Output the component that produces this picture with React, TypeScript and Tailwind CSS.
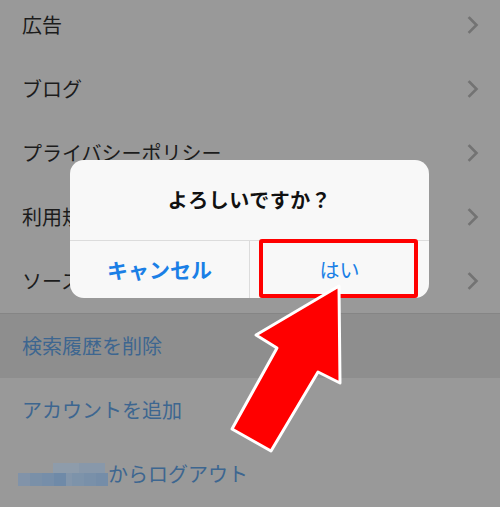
import React from "react";

const font = { fontFamily: '"Noto Sans CJK JP", "Noto Sans", sans-serif' };

function Chevron() {
  return (
    <svg width="12" height="18" viewBox="0 0 12 18" className="shrink-0">
      <polyline points="2.5,2 9.5,9 2.5,16" fill="none" stroke="#737373" strokeWidth="2.6" strokeLinecap="square" />
    </svg>
  );
}

function Row({ label }: { label: string }) {
  return (
    <div className="h-16 flex items-center justify-between pl-[22px] pr-[21px]">
      <span className="text-[20px] text-[#1c1c1c] leading-none">{label}</span>
      <Chevron />
    </div>
  );
}

function Pixelated() {
  return (
    <div className="relative w-[90px] h-[23px]">
      <div className="absolute left-[35px] top-0 w-[26px] h-[10px] bg-[#8e9cab]" />
      <div className="absolute left-[61px] top-0 w-[26px] h-[10px] bg-[#8898aa]" />
      <div className="absolute left-0 top-[10px] flex h-[13px]">
        <div className="w-[12px] bg-[#8193a9]" />
        <div className="w-[12px] bg-[#7a90a8]" />
        <div className="w-[12px] bg-[#768ea9]" />
        <div className="w-[12px] bg-[#6f8aa8]" />
        <div className="w-[6px] bg-[#8396ab]" />
        <div className="w-[12px] bg-[#7d93aa]" />
        <div className="w-[12px] bg-[#7990a9]" />
        <div className="w-[12px] bg-[#758da8]" />
      </div>
    </div>
  );
}

export default function App() {
  return (
    <div className="relative w-[500px] h-[507px] overflow-hidden bg-[#999999]" style={font}>
      <div className="-mt-[7px]">
        <Row label="広告" />
        <Row label="ブログ" />
        <Row label="プライバシーポリシー" />
        <Row label="利用規約" />
        <Row label="ソース" />
        <div className="h-px bg-[#858585]" />
        <div className="h-16 bg-[#8e8e8e] flex items-center pl-[22px]">
          <span className="text-[20px] text-[#3d6690] leading-none">検索履歴を削除</span>
        </div>
        <div className="h-16 flex items-center pl-[22px]">
          <span className="text-[20px] text-[#3d6690] leading-none">アカウントを追加</span>
        </div>
        <div className="h-16 flex items-center pl-[18px]">
          <Pixelated />
          <span className="text-[20px] text-[#3d6690] leading-none">からログアウト</span>
        </div>
      </div>

      {/* Dialog */}
      <div className="absolute left-[70px] top-[160px] w-[359px] h-[138px] rounded-[14px] bg-[#f8f8f8] flex flex-col overflow-hidden">
        <div className="h-[80px] flex items-center justify-center">
          <span className="text-[20px] font-bold text-[#111111] leading-none tracking-[0.5px]">よろしいですか？</span>
        </div>
        <div className="h-px bg-[#dcdcdc]" />
        <div className="flex-1 flex">
          <div className="flex-1 flex items-center justify-center">
            <span className="text-[21px] font-bold text-[#1a7fe6] leading-none">キャンセル</span>
          </div>
          <div className="w-px bg-[#dcdcdc]" />
          <div className="flex-1 flex items-center justify-center">
            <span className="text-[20px] text-[#1a7fe6] leading-none">はい</span>
          </div>
        </div>
      </div>

      {/* Red highlight box */}
      <div className="absolute left-[259px] top-[239px] w-[159px] h-[59px] border-[4px] border-[#ff0000] rounded-[3px]" />

      {/* Arrow */}
      <svg className="absolute left-0 top-0" width="500" height="507" viewBox="0 0 500 507">
        <polygon
          points="339,286 340,383 318,372 271,451 232,429 277,348 256,335"
          fill="#ff0000"
          stroke="#ffffff"
          strokeWidth="3"
          strokeLinejoin="round"
        />
      </svg>
    </div>
  );
}
